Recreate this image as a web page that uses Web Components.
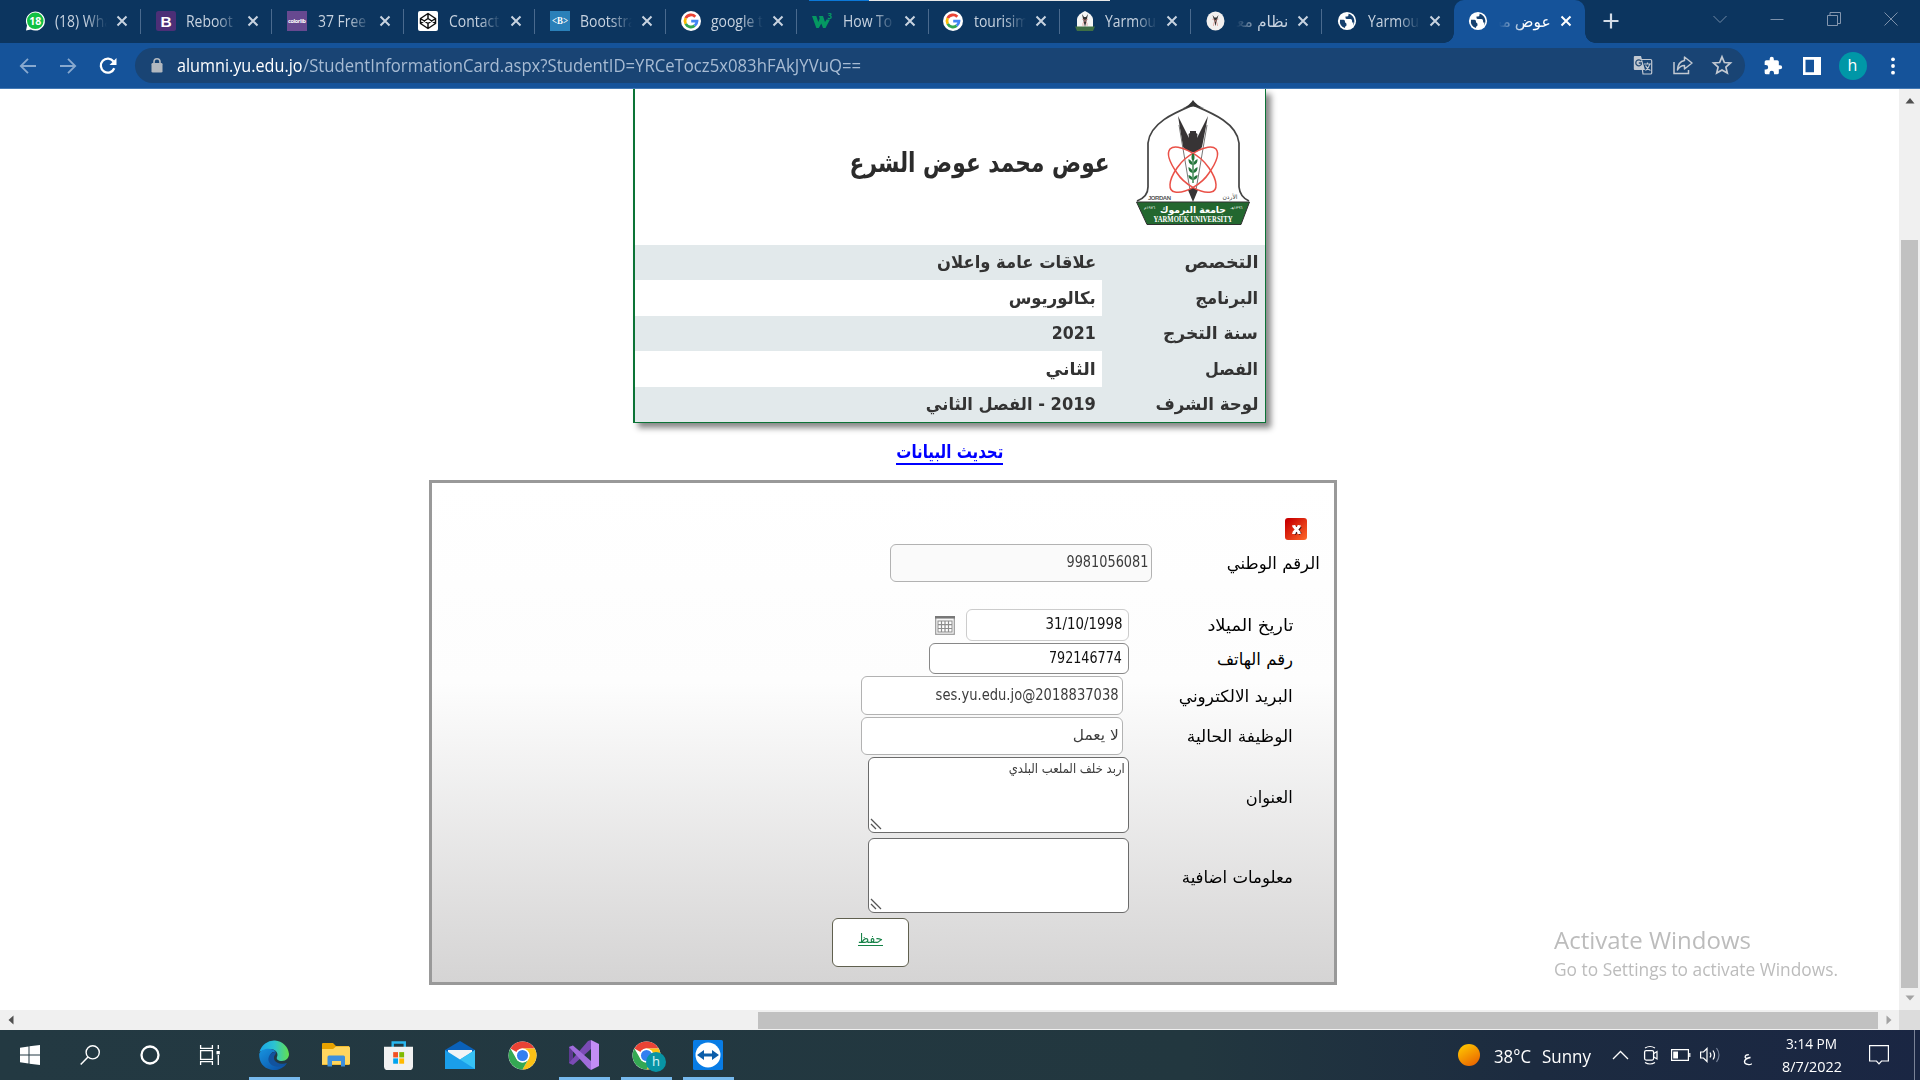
<!DOCTYPE html>
<html lang="ar">
<head>
<meta charset="utf-8">
<title>بطاقة الطالب</title>
<style>
html,body{margin:0;width:1920px;height:1080px;overflow:hidden;background:#fff;font-family:"Open Sans","DejaVu Sans",sans-serif}
</style>
</head>
<body>
<desktop-screen></desktop-screen>
<script>
const ICONS = {
whatsapp:`<svg viewBox="0 0 20 20"><path d="M1 19.5 2 14.5A9.5 9.5 0 1 1 5.800 18.400Z" fill="#fff"/><circle cx="10.300" cy="9.800" r="8.300" fill="#12c143"/><text x="10.200" y="13.600" font-size="10.500" font-weight="700" fill="#fff" text-anchor="middle" font-family="Open Sans" textLength="12">18</text></svg>`,
boot5:`<svg viewBox="0 0 20 20"><rect width="20" height="20" rx="2.500" fill="#4c2f77"/><text x="10" y="15.500" font-size="15.500" font-weight="700" fill="#fff" text-anchor="middle" font-family="Liberation Sans">B</text></svg>`,
colorlib:`<svg viewBox="0 0 20 20"><rect width="20" height="20" fill="#674990"/><text x="1" y="12" font-size="5.500" font-weight="700" fill="#fff" font-family="Open Sans" textLength="18">colorlib</text></svg>`,
codepen:`<svg viewBox="0 0 20 20"><rect width="20" height="20" rx="2" fill="#fff"/><path d="M10 2.500 17.500 7.500V12.500L10 17.500 2.500 12.500V7.500ZM10 2.500V7.500M10 12.500V17.500M2.500 7.500 10 12.500 17.500 7.500M2.500 12.500 10 7.500 17.500 12.500" fill="none" stroke="#111" stroke-width="1.500" stroke-linejoin="round"/></svg>`,
boot3:`<svg viewBox="0 0 20 20"><rect width="20" height="20" fill="#2a80b9"/><text x="10" y="13.300" font-size="10" font-weight="700" fill="#fff" text-anchor="middle" font-family="Liberation Serif" textLength="16" lengthAdjust="spacingAndGlyphs">&lt;B&gt;</text></svg>`,
google:`<svg viewBox="0 0 20 20"><circle cx="10" cy="10" r="10" fill="#fff"/><g fill="none" stroke-width="2.800"><path d="M14.300 5.700A6 6 0 0 0 4.700 7.200" stroke="#ea4335"/><path d="M4.700 7.200A6 6 0 0 0 4.700 12.800" stroke="#fbbc05"/><path d="M4.700 12.800A6 6 0 0 0 13.700 14.700" stroke="#34a853"/><path d="M13.700 14.700A6 6 0 0 0 16 10.200H10.200" stroke="#4285f4"/></g></svg>`,
w3:`<svg viewBox="0 0 20 20"><path d="M0 5H4.300L6.300 11 7.700 7.500 7 5H11L13 11 14.500 8.500H18L13.500 17H11L9.300 12.500 6.800 17H4.300Z" fill="#059862"/><text x="15.500" y="7.500" font-size="8" font-weight="700" fill="#059862" font-family="Open Sans">3</text></svg>`,
yarmouk:`<svg viewBox="0 0 20 20"><path d="M2 16V8Q3 3 10 0 17 3 18 8V16Z" fill="#f5f5f5"/><path d="M7 3 9 6H11L13 3 11.500 10 10 16 8.500 10Z" fill="#333"/><path d="M7 8Q13 10 12 15M13 8Q7 10 8 15" stroke="#d98d86" fill="none" stroke-width=".7"/><path d="M0 15.500H20L18 20H2Z" fill="#3f6f45"/></svg>`,
yround:`<svg viewBox="0 0 20 20"><ellipse cx="9.500" cy="10" rx="9" ry="9.500" fill="#f2f0ef"/><path d="M6.500 4 8.500 6.500H10.500L12.500 4 11 9 9.500 15 8 9Z" fill="#333"/><path d="M6 8Q12 10 11.500 15M12.500 8Q7 10 7.500 15" stroke="#e09a92" fill="none" stroke-width=".7"/></svg>`,
globe:`<svg viewBox="0 0 20 20"><circle cx="10" cy="10" r="9.100" fill="#fff"/><path d="M3 8.800H6.500Q8 8.800 8 10.500V11.500Q9.500 11.500 9.500 13.500V14.500Q8 15 7.800 17A7.500 7.500 0 0 1 3 8.800ZM11.500 2.800V4Q11.500 5.500 9.800 5.500H8.500V7Q8.500 8 10 8H13.500Q15 8 15 9.500L15.200 11.500H16.500L16 14.500A7.500 7.500 0 0 0 11.500 2.800Z" fill="#15406f"/></svg>`,
x:`<svg viewBox="0 0 12 12"><path d="M1.500 1.500 10.500 10.500M10.500 1.500 1.500 10.500" stroke="currentColor" stroke-width="2" fill="none"/></svg>`,
plus:`<svg viewBox="0 0 16 16"><path d="M8 .5V15.500M.5 8H15.500" stroke="#d3dce7" stroke-width="2.200"/></svg>`,
back:`<svg viewBox="0 0 18 18"><path d="M17 9H2M9 1.800 1.800 9 9 16.200" fill="none" stroke="#88a9cf" stroke-width="1.800"/></svg>`,
fwd:`<svg viewBox="0 0 18 18"><path d="M1 9H16M9 1.800 16.200 9 9 16.200" fill="none" stroke="#88a9cf" stroke-width="1.800"/></svg>`,
reload:`<svg viewBox="0 0 18 18"><path d="M15.300 11.300A7 7 0 1 1 14.500 4.500" fill="none" stroke="#fff" stroke-width="2.300"/><path d="M17.500 1V8H10.500Z" fill="#fff"/></svg>`,
lock:`<svg viewBox="0 0 12 15"><rect x=".5" y="5" width="11" height="9.500" rx="1.300" fill="#b3b9c0"/><path d="M3 6V3.800A3 3 0 0 1 9 3.800V6" fill="none" stroke="#b3b9c0" stroke-width="1.600"/></svg>`,
translate:`<svg viewBox="0 0 20 20"><path d="M8 4.500H17.500Q18.700 4.500 18.700 5.700V18Q18.700 19 17.500 19H10Z" fill="none" stroke="#c2c9d2" stroke-width="1.200"/><path d="M1.800 1H8L12 15H1.800Q.8 15 .8 14V2Q.8 1 1.800 1Z" fill="#c2c9d2"/><path d="M8.200 6A3 3 0 1 0 8.300 9.500V8H5.800" fill="none" stroke="#254b74" stroke-width="1.300"/><path d="M11 9H18M14.500 7.500V9M16.800 9Q16 13 12.500 15.500M12.500 10.500Q14 14 17.500 15.500" fill="none" stroke="#c2c9d2" stroke-width="1.200"/></svg>`,
share:`<svg viewBox="0 0 20 20"><path d="M1 7V18.500H15.500V15" fill="none" stroke="#c2c9d2" stroke-width="1.500"/><path d="M11.500 2 19 8 11.500 14V10.500Q7 10.500 4.500 15 5 6.500 11.500 5.500Z" fill="none" stroke="#c2c9d2" stroke-width="1.500" stroke-linejoin="round"/></svg>`,
star:`<svg viewBox="0 0 20 20"><path d="M10 1.800 12.400 7.500 18.500 8 13.900 12.100 15.300 18.100 10 14.900 4.700 18.100 6.100 12.100 1.500 8 7.600 7.500Z" fill="none" stroke="#c2c9d2" stroke-width="1.700"/></svg>`,
puzzle:`<svg viewBox="0 0 24 24"><path d="M20.500 11H19V7a2 2 0 0 0-2-2h-4V3.500a2.500 2.500 0 0 0-5 0V5H4a2 2 0 0 0-2 2v3.800h1.500a2.700 2.700 0 0 1 0 5.400H2V20a2 2 0 0 0 2 2h3.800v-1.500a2.700 2.700 0 0 1 5.400 0V22H17a2 2 0 0 0 2-2v-4h1.500a2.500 2.500 0 0 0 0-5Z" fill="#fff"/></svg>`,
side:`<svg viewBox="0 0 18 18"><path d="M0 0H18V18H0ZM2.500 2.700V15.300H11V2.700Z" fill="#fff" fill-rule="evenodd"/></svg>`,
dots:`<svg viewBox="0 0 4 18"><g fill="#fff"><circle cx="2" cy="2.300" r="1.900"/><circle cx="2" cy="9" r="1.900"/><circle cx="2" cy="15.700" r="1.900"/></g></svg>`,
wchev:`<svg viewBox="0 0 14 14"><path d="M.5 4 7 10.500 13.500 4" fill="none" stroke="#7189a5"/></svg>`,
wmin:`<svg viewBox="0 0 14 14"><path d="M.5 7.500H13.500" stroke="#7d91ab"/></svg>`,
wmax:`<svg viewBox="0 0 14 14"><path d="M.5 3.500H10.500V13.500H.5ZM3 3.500V.5H13.500V11.500H10.500" fill="none" stroke="#8496ae"/></svg>`,
wclose:`<svg viewBox="0 0 14 14"><path d="M.5 .5 13.500 13.500M13.500 .5 .5 13.500" stroke="#7d91ab"/></svg>`,
logo:`<svg viewBox="0 0 114 125"><path d="M1 101Q12 97 12 87V43C14 23 38 13 57 5 76 13 101 23 103 43V87Q104 97 113 101" fill="#fff" stroke="#444" stroke-width="1.700"/><path d="M47 8Q54 5 57 0 60 5 68 8Q57 5 47 8Z" fill="#333"/><path d="M42 16 53 38 52.500 34 54 33V31H60V33L61.500 34 61 38 72 16 66 47Q62 53 57 52 51 52 47 47Z" fill="#373435"/><path d="M43 25 54 90M71 25 60 90" stroke="#777" stroke-width="1" fill="none"/><path d="M52 90Q57 85 62 90L57 102Z" fill="#373435"/><g fill="none" stroke="#ea5148" stroke-width="1.500"><path d="M34 49C40 43 63 53 73 68 82 81 82 91 75 92 65 94 48 84 41 73 34 63 30 54 34 49Z"/><path d="M80 49C74 43 51 53 41 68 32 81 32 91 39 92 49 94 66 84 73 73 80 63 84 54 80 49Z"/></g><path d="M57 57V83" stroke="#23753a" stroke-width="1.300"/><g fill="#23753a"><ellipse cx="57" cy="57" rx="1.500" ry="3.500"/><path d="M56.500 65Q52 64 52.500 59 57 61 56.500 65ZM57.500 65Q62 64 61.500 59 57 61 57.500 65ZM56.500 73Q52 72 52.500 67 57 69 56.500 73ZM57.500 73Q62 72 61.500 67 57 69 57.500 73ZM56.500 80Q52 79 52.500 75 57 76 56.500 80ZM57.500 80Q62 79 61.500 75 57 76 57.500 80Z"/></g><path d="M.5 102H113.500L105 124.500H11Z" fill="#23672f" stroke="#303030"/><g font-family="Liberation Sans"><text x="23.500" y="100" font-size="6" font-weight="700" fill="#555" text-anchor="middle" textLength="23">JORDAN</text><text x="94" y="98.500" font-size="6" fill="#444" text-anchor="middle" font-family="DejaVu Sans">الأردن</text><g fill="#fff"><text x="57" y="112.500" font-size="9.500" font-weight="700" text-anchor="middle" font-family="DejaVu Sans" textLength="66" lengthAdjust="spacingAndGlyphs">جامعة اليرموك</text><text x="100.500" y="109" font-size="4" text-anchor="middle" font-family="DejaVu Sans">١٣٩٦هـ</text><text x="13.500" y="109" font-size="4" text-anchor="middle" font-family="DejaVu Sans">١٩٧٦م</text><text x="57" y="122" font-size="7.500" font-weight="700" text-anchor="middle" font-family="Liberation Serif" textLength="79" lengthAdjust="spacingAndGlyphs">YARMOUK UNIVERSITY</text></g></g></svg>`,
redx:`<svg viewBox="0 0 22 22"><defs><linearGradient id="r" x1="0" y1="0" x2="1" y2="1"><stop offset=".1" stop-color="#c80000"/><stop offset="1" stop-color="#ff6a2a"/></linearGradient></defs><rect width="22" height="22" rx="3" fill="url(#r)"/><path d="M9.500 8.500 15.500 16M15.500 8.500 9.500 16" stroke="#3c1010" stroke-width="3"/><path d="M8.500 8 14.500 15M14.500 8 8.500 15" stroke="#fff" stroke-width="2.800"/><path d="M7.200 7.900H10.500M12.500 7.900H15.700M7.200 15.200H10.500M12.500 15.200H15.700" stroke="#fff" stroke-width="1.500"/></svg>`,
cal:`<svg viewBox="0 0 20 19"><rect x=".7" y=".7" width="18.600" height="17.600" fill="#f7f7f7" stroke="#999" stroke-width="1.200"/><path d="M0 1.300H20" stroke="#777" stroke-width="2.500"/><rect x="3" y="5" width="14" height="11" fill="#fff" stroke="#8d8d8d"/><path d="M6.500 5V16M10 5V16M13.500 5V16M3 8.700H17M3 12.500H17" stroke="#8d8d8d" stroke-width="1.200"/></svg>`,
grip:`<svg viewBox="0 0 12 12"><path d="M1 1 11 11M1 6 6 11" stroke="#555" stroke-width="1.300"/></svg>`,
win:`<svg viewBox="0 0 20 20"><path d="M0 2.700 8.500 1.400V9.500H0ZM9.500 1.300 20 0V9.500H9.500ZM0 10.500H8.500V18.600L0 17.300ZM9.500 10.500H20V20L9.500 18.700Z" fill="#fff"/></svg>`,
search:`<svg viewBox="0 0 20 20"><circle cx="12.700" cy="7.300" r="6.600" fill="none" stroke="#fff" stroke-width="1.400"/><path d="M8 12 .7 19.500" stroke="#fff" stroke-width="1.500"/></svg>`,
cortana:`<svg viewBox="0 0 20 20"><circle cx="10" cy="10" r="8.500" fill="none" stroke="#fff" stroke-width="2.300"/></svg>`,
task:`<svg viewBox="0 0 20 20"><path d="M.6 0V3.300H12.400V0M.6 20V16.700H12.400V20M.6 5.700H12.400V14.300H.6ZM18.300 0V4M18.300 10V20" fill="none" stroke="#fff" stroke-width="1.300"/><rect x="16.500" y="6" width="3.300" height="3.300" fill="#fff"/></svg>`,
edge:`<svg viewBox="0 0 30 30"><defs><linearGradient id="e" x1="0" x2="1"><stop stop-color="#1aa4e8"/><stop offset=".5" stop-color="#2cc3d2"/><stop offset="1" stop-color="#63e04e"/></linearGradient><linearGradient id="f" x1="0" y1="0" x2="1" y2="1"><stop stop-color="#1794e0"/><stop offset="1" stop-color="#0a4aa0"/></linearGradient></defs><path d="M.5 12A15 15 0 0 1 30 14C30 18 27 21 23 21 19 21 17 19 18 17 20 13 16 9 12 9 6 9 1 12 .5 12Z" fill="url(#e)"/><path d="M.2 14C2 8 14 7 17 12 13 11 10 15 11 19 13 26 21 28 28 23 24 29 18 31 12 29.700 4 28 0 22 .2 14Z" fill="url(#f)"/><path d="M17 12C12 11 8 17 10 22 13 28 22 28 28 23 23 25 15 23 15 18 15 15 17 15 17 12Z" fill="#12539e"/></svg>`,
folder:`<svg viewBox="0 0 28 24"><path d="M0 1Q0 0 1 0H11L14 3H27V22H0Z" fill="#e8a200"/><path d="M0 6H11L14 3.500H27Q28 3.500 28 5V21.500H0Z" fill="#ffd65f"/><path d="M5.500 23.500V14Q5.500 12.500 7 12.500H21.500Q23 12.500 23 14V23.500H19V18H10V23.500Z" fill="#3d8fdc"/></svg>`,
store:`<svg viewBox="0 0 30 30"><path d="M9 7V1.500H21.500V7" fill="none" stroke="#29b6ee" stroke-width="2.500"/><path d="M0 6H30V26Q30 30 26 30H4Q0 30 0 26Z" fill="#f1f1f1"/><path d="M9.500 11.500H14.500V17H9.500Z" fill="#f25022"/><path d="M15.800 11.500H20.800V17H15.800Z" fill="#7fba00"/><path d="M9.500 18H14.500V23.500H9.500Z" fill="#00a4ef"/><path d="M15.800 18H20.800V23.500H15.800Z" fill="#ffb900"/></svg>`,
mail:`<svg viewBox="0 0 30 29"><path d="M0 9 15 0 30 9V20H0Z" fill="#0a61b9"/><path d="M3 9H27V20H3Z" fill="#f1f4f6"/><path d="M0 9 15 18.500 30 9V28H0Z" fill="#1a9eea"/><path d="M15 18.500 30 9V28Z" fill="#37c2f5"/></svg>`,
chrome:`<svg viewBox="0 0 30 30"><circle cx="15" cy="15" r="14.500" fill="#fff"/><path d="M15 .5A14.500 14.500 0 0 1 27.600 7.800H15A7.200 7.200 0 0 0 8.800 11.400L2.500 7.800A14.500 14.500 0 0 1 15 .5Z" fill="#ea4335"/><path d="M27.600 7.800A14.500 14.500 0 0 1 15 29.500L21.200 18.600A7.200 7.200 0 0 0 21.200 11.400L15 7.800Z" fill="#fbc116"/><path d="M2.500 7.800A14.500 14.500 0 0 0 15 29.500L21.200 18.600A7.200 7.200 0 0 1 8.800 18.600Z" fill="#34a853"/><circle cx="15" cy="15" r="7.200" fill="#fff"/><circle cx="15" cy="15" r="5.700" fill="#347ff0"/></svg>`,
vs:`<svg viewBox="0 0 30 30"><path d="M0 7 4 5.500V24.500L0 23Z" fill="#5d3a91"/><path d="M0 23 4 25 22 9V0L19 1Z" fill="#7a4bb5"/><path d="M0 7 4 5.500 22 21V30L19 28Z" fill="#a06ddb"/><path d="M22 0 30 4V26L22 30Z" fill="#c38df5"/></svg>`,
tv:`<svg viewBox="0 0 30 30"><rect width="30" height="30" rx="1.500" fill="#087ce5"/><circle cx="15" cy="15" r="12.500" fill="#fff"/><path d="M4 15 11 10V13.500H19V10L26 15 19 20V16.500H11V20Z" fill="#0c5eaa"/></svg>`,
sun:`<svg viewBox="0 0 22 22"><defs><linearGradient id="s" x1=".2" y1="0" x2=".8" y2="1"><stop stop-color="#ffc800"/><stop offset="1" stop-color="#ea6200"/></linearGradient></defs><circle cx="11" cy="11" r="11" fill="url(#s)"/></svg>`,
up:`<svg viewBox="0 0 17 10"><path d="M1 9 8.500 1.500 16 9" fill="none" stroke="#fff" stroke-width="1.300"/></svg>`,
meet:`<svg viewBox="0 0 16 20"><rect x="1.600" y="5.600" width="9" height="9.500" rx="1.500" fill="none" stroke="#fff" stroke-width="1.300"/><path d="M10.800 8.500 14 6.500V14L10.800 12M2 3Q7 0 12 3M2 17.500Q7 20.500 12 17.500" fill="none" stroke="#fff" stroke-width="1.200"/></svg>`,
battery:`<svg viewBox="0 0 20 12"><path d="M.6 .6H17.400V11.400H.6ZM18.800 4V8" fill="none" stroke="#fff" stroke-width="1.200"/><rect x="2.200" y="2.500" width="4.800" height="7" fill="#fff"/></svg>`,
speaker:`<svg viewBox="0 0 21 18"><path d="M.6 6H3.500L7 2.500V15.500L3.500 12H.6Z" fill="none" stroke="#fff" stroke-width="1.200"/><path d="M10 6.500Q11.700 9 10 11.500M13 4.500Q16 9 13 13.500" fill="none" stroke="#fff" stroke-width="1.200"/><path d="M16.500 2Q21.500 9 16.500 16" fill="none" stroke="#78849b" stroke-width="1.200"/></svg>`,
notif:`<svg viewBox="0 0 20 20"><path d="M.6 .6H19.400V16H12.500L10 18.800 7.500 16H.6Z" fill="none" stroke="#fff" stroke-width="1.200"/></svg>`,
aup:`<svg viewBox="0 0 10 6"><path d="M5 0 9.500 5.500H.5Z" fill="#505050"/></svg>`,
adown:`<svg viewBox="0 0 10 6"><path d="M5 5.500 9.500 .5H.5Z" fill="#a3a3a3"/></svg>`,
aleft:`<svg viewBox="0 0 6 10"><path d="M.5 5 5.500 .5V9.500Z" fill="#505050"/></svg>`,
aright:`<svg viewBox="0 0 6 10"><path d="M5.500 5 .5 .5V9.500Z" fill="#a3a3a3"/></svg>`
};

function component(name, render, ready){
  customElements.define(name, class extends HTMLElement{
    connectedCallback(){
      if(this.shadowRoot) return;
      const t=document.createElement('template');
      t.innerHTML=render(this);
      this.attachShadow({mode:'open'}).append(t.content.cloneNode(true));
      if(ready) ready(this);
    }
  });
}
const a=(e,n,d='')=>e.getAttribute(n)??d;

component('ui-icon', e=>`<style>:host{display:block;flex:none;direction:ltr;width:${a(e,'w','20')}px;height:${a(e,'h',a(e,'w','20'))}px}svg{display:block;width:100%;height:100%;overflow:visible}</style>${ICONS[a(e,'name')]}`);

/* Single line of text condensed or stretched to a given width. */
component('fit-text', e=>`<style>:host{display:block;flex:none;width:${a(e,'w')}px;font-size:${a(e,'size','15')}px;line-height:1.3;white-space:nowrap}span{display:inline-block;transform-origin:${a(e,'dir')==='rtl'?'right':'left'} center}</style><span><slot></slot></span>`,
 e=>{const s=e.shadowRoot.querySelector('span');s.style.transform=`scaleX(${(+a(e,'w'))/s.getBoundingClientRect().width})`;});

component('browser-tab', e=>`<style>
:host{display:flex;flex:none;box-sizing:border-box;width:131.250px;height:43px;align-items:center;padding-left:14.500px;position:relative;color:#c8d3e0;font-size:15.500px}
:host::after{content:"";width:1px;height:25px;background:#4a6a8e;margin-left:12px;flex:none}
:host([active]){background:#15539a;border-radius:10px 10px 0 0;color:#fff}
:host([active])::after,:host([last])::after{background:transparent}
:host([active]) .l,:host([active]) .r{position:absolute;bottom:0;width:10px;height:10px}
.l{left:-10px;background:radial-gradient(circle at 0 0,transparent 9.500px,#15539a 10px)}
.r{right:-10px;background:radial-gradient(circle at 100% 0,transparent 9.500px,#15539a 10px)}
ui-icon{margin-top:-1px}
.t{flex:none;width:52px;margin:-2px 9px 0 10.500px;overflow:hidden;white-space:nowrap;-webkit-mask-image:linear-gradient(to right,#000 58%,transparent);line-height:26px;height:26px}
.t span{display:inline-block;transform:scaleX(.9);transform-origin:left}
.t[dir=rtl]{-webkit-mask-image:linear-gradient(to left,#000 50%,transparent)}.t[dir=rtl] span{transform:none}
</style><i class="l"></i><ui-icon name="${a(e,'icon')}"></ui-icon><div class="t" dir="${a(e,'tdir','ltr')}"><span><slot></slot></span></div><ui-icon name="x" w="12"></ui-icon><i class="r"></i>`);

component('tab-strip', ()=>`<style>
:host{display:flex;height:43px;background:#0c355f;align-items:center;padding-left:10px;position:relative}
.g{flex:none;margin:-1px 0 0 17.500px}.c{display:flex;gap:43px;margin-left:94px;margin-top:-6px}
.edge{position:absolute;top:0;left:809px;width:301px;height:1px;background:linear-gradient(to right,#0b78d8 60px,#e8e8e8 60px)}
</style>
<browser-tab icon="whatsapp">(18) What</browser-tab><browser-tab icon="boot5">Reboot ·</browser-tab><browser-tab icon="colorlib">37 Free B</browser-tab><browser-tab icon="codepen">Contact F</browser-tab><browser-tab icon="boot3">Bootstrap</browser-tab><browser-tab icon="google">google tra</browser-tab><browser-tab icon="w3">How To M</browser-tab><browser-tab icon="google">tourisim t</browser-tab><browser-tab icon="yarmouk">Yarmouk</browser-tab><browser-tab icon="yround" tdir="rtl">نظام معلومات</browser-tab><browser-tab icon="globe" last>Yarmouk</browser-tab><browser-tab icon="globe" active tdir="rtl">عوض محمد</browser-tab>
<ui-icon class="g" name="plus" w="16"></ui-icon><div class="c"><ui-icon name="wchev" w="14"></ui-icon><ui-icon name="wmin" w="14"></ui-icon><ui-icon name="wmax" w="14"></ui-icon><ui-icon name="wclose" w="14"></ui-icon></div><i class="edge"></i>`);

component('address-bar', ()=>`<style>
:host{display:flex;box-sizing:border-box;height:46px;background:#15539a;border-bottom:1px solid #4379b4;align-items:center;padding-left:18.500px;padding-top:1px}
.box{display:flex;align-items:center;box-sizing:border-box;width:1610px;height:35px;border-radius:18px;background:#194474;margin:-2px 0 0 17.500px;padding:0 12.500px 0 16.500px;color:#a7bbd3}
.a{display:flex;gap:19.500px;margin-left:auto}.h{color:#fff}.box fit-text{margin-top:1px}.box fit-text:first-of-type{margin-left:14px}
.av{width:28px;height:28px;border-radius:50%;background:#0097a7;color:#fff;font-size:16px;line-height:27px;text-align:center;margin:-1px 24px 0 18px}
</style>
<ui-icon name="back" w="18"></ui-icon><ui-icon name="fwd" w="18" style="margin-left:22px"></ui-icon><ui-icon name="reload" w="18" style="margin-left:22.500px"></ui-icon>
<div class="box"><ui-icon name="lock" w="12" h="15"></ui-icon><fit-text class="h" w="125.500" size="17.500">alumni.yu.edu.jo</fit-text><fit-text w="558" size="17.500">/StudentInformationCard.aspx?StudentID=YRCeTocz5x083hFAkJYVuQ==</fit-text>
<div class="a"><ui-icon name="translate" w="20"></ui-icon><ui-icon name="share" w="20"></ui-icon><ui-icon name="star" w="20"></ui-icon></div></div>
<ui-icon name="puzzle" w="20" style="margin-left:18px"></ui-icon><ui-icon name="side" w="18" style="margin-left:20px"></ui-icon><div class="av">h</div><ui-icon name="dots" w="4" h="18"></ui-icon>`);

component('info-row', e=>`<style>
:host{display:flex;height:${a(e,'h','35')}px;color:#333;font-weight:700;font-family:"DejaVu Sans",sans-serif}
div{display:flex;align-items:center;box-sizing:border-box}
.k{width:163px;padding-right:7px;background:#e2e9eb}.v{flex:1;padding-right:6px;background:${e.hasAttribute('alt')?'#fff':'#e2e9eb'}}
</style><div class="k"><fit-text dir="rtl" size="17.500" w="${a(e,'kw')}">${a(e,'label')}</fit-text></div><div class="v"><fit-text dir="rtl" size="17.500" w="${a(e,'vw')}"><slot></slot></fit-text></div>`);

component('student-card', ()=>`<style>
:host{display:block;direction:rtl;box-sizing:border-box;width:633px;height:334px;margin-left:633px;border:solid #0b7336;border-width:0 1px 1px 2px;box-shadow:5px 5px 6px #888;background:#fff}
.top{display:flex;height:156px;align-items:flex-start}.top ui-icon{margin:11px 15px 0 0}.top fit-text{margin:56px 26px 0 0;color:#2b2b2b;font-weight:700;font-family:"DejaVu Sans",sans-serif}
</style><div class="top"><ui-icon name="logo" w="114" h="125"></ui-icon><fit-text dir="rtl" w="260" size="27">عوض محمد عوض الشرع</fit-text></div>
<info-row label="التخصص" kw="74" vw="159">علاقات عامة واعلان</info-row>
<info-row alt h="36" label="البرنامج" kw="63" vw="87">بكالوريوس</info-row>
<info-row label="سنة التخرج" kw="95" vw="44">2021</info-row>
<info-row alt h="36" label="الفصل" kw="53" vw="50">الثاني</info-row>
<info-row label="لوحة الشرف" kw="103" vw="170">2019 - الفصل الثاني</info-row>`);

component('form-row', e=>`<style>
:host{display:flex;align-items:center;height:${a(e,'h')}px;margin-top:${a(e,'mt','2')}px;padding-right:${a(e,'pr','41')}px}
.l{display:flex;width:${a(e,'lw','164')}px;flex:none;color:#000;margin-top:${a(e,'dy','2')}px}
</style><div class="l"><fit-text dir="rtl" size="16.500" w="${a(e,'tw')}">${a(e,'label')}</fit-text></div><slot></slot>`);

component('form-field', e=>`<style>
:host{display:flex;box-sizing:border-box;width:${a(e,'w')}px;height:100%;border:1px solid ${a(e,'line','#b2b2b2')};border-radius:6px;background:${a(e,'bg','#fff')};padding-right:${a(e,'pr','3')}px;align-items:center;color:${a(e,'ink','#3c3c3c')};position:relative}
:host([area]){align-items:flex-start;padding-top:3px}
.g{position:absolute;left:1px;bottom:2px}
</style>${a(e,'tw')?`<fit-text dir="rtl" size="${a(e,'size','15')}" w="${a(e,'tw')}"><slot></slot></fit-text>`:''}${e.hasAttribute('area')?'<ui-icon class="g" name="grip" w="12"></ui-icon>':''}`);

component('update-form', ()=>`<style>
:host{display:block;direction:rtl;box-sizing:border-box;width:908px;height:505px;margin-left:429px;border:3px solid #999;padding-top:35px;background:linear-gradient(#fff 0,#fdfdfd 40%,#d5d4d4 100%);font-family:"DejaVu Sans",sans-serif}
.x{margin-right:27px}.save{display:flex;box-sizing:border-box;width:77px;height:49px;margin:5px 425px 0 0;border:1px solid #60604f;border-radius:6px;background:#fff;justify-content:center;padding-top:12px;color:#168247}
.save fit-text{height:14px;border-bottom:1.500px solid #168247}
</style><ui-icon class="x" name="redx" w="22"></ui-icon>
<form-row mt="4" h="38" pr="14" lw="168" label="الرقم الوطني" tw="93"><form-field w="262" bg="#fafafa" tw="82">9981056081</form-field></form-row>
<form-row mt="27" h="32" label="تاريخ الميلاد" tw="86"><form-field w="163" line="#ccc" pr="6" ink="#111" tw="77">31/10/1998</form-field><ui-icon name="cal" w="20" h="19" style="margin-right:11px"></ui-icon></form-row>
<form-row h="31" label="رقم الهاتف" tw="76"><form-field w="200" line="#888" pr="6" ink="#111" tw="73">792146774</form-field></form-row>
<form-row h="39" lw="170" label="البريد الالكتروني" tw="114"><form-field w="262" tw="183">ses.yu.edu.jo@2018837038</form-field></form-row>
<form-row h="38" lw="170" label="الوظيفة الحالية" tw="106"><form-field w="262" tw="46">لا يعمل</form-field></form-row>
<form-row h="76" dy="5" label="العنوان" tw="47"><form-field area w="261" line="#6b6b6b" size="13" tw="116">اربد خلف الملعب البلدي</form-field></form-row>
<form-row mt="5" h="75" dy="5" label="معلومات اضافية" tw="111"><form-field area w="261" line="#6b6b6b"></form-field></form-row>
<div class="save"><fit-text dir="rtl" w="25" size="13">حفظ</fit-text></div>`);

component('activation-note', ()=>`<style>:host{display:block;position:absolute;left:1554px;top:835px;color:#bcbcbc}fit-text+fit-text{margin-top:2px}</style><fit-text w="197" size="24.500">Activate Windows</fit-text><fit-text w="284" size="18">Go to Settings to activate Windows.</fit-text>`);

component('web-view', ()=>`<style>
:host{display:flex;height:941px;flex-direction:column;background:#fff;position:relative}
.m{display:flex;height:921px}.p{width:1899px;overflow:hidden}
.v{box-sizing:border-box;width:21px;background:#f0f0f0;display:flex;flex-direction:column;align-items:center;padding:9px 0 9px}
.v i{width:17px;height:749px;background:#c1c1c1;margin:136px 0 7px}
.h{height:20px;display:flex;align-items:center;background:#f0f0f0}.h i{width:1120px;height:17px;background:#c1c1c1;margin:1px 8px 0 744px}.h b{width:21px;height:20px;margin-left:auto;background:#dcdcdc}
.link{margin:16px 0 0 896px;width:107px;height:26px;box-sizing:border-box;color:#00f;font-weight:700;font-family:"DejaVu Sans",sans-serif;border-bottom:2px solid #00f}
update-form{margin-top:15px}
</style><div class="m"><div class="p"><student-card></student-card><div class="link"><fit-text dir="rtl" w="107" size="19">تحديث البيانات</fit-text></div><update-form></update-form></div>
<div class="v"><ui-icon name="aup" w="10" h="6"></ui-icon><i></i><ui-icon name="adown" w="10" h="6"></ui-icon></div></div>
<div class="h"><ui-icon name="aleft" w="6" h="10" style="margin-left:8px"></ui-icon><i></i><ui-icon name="aright" w="6" h="10"></ui-icon><b></b></div><activation-note></activation-note>`);

component('task-item', e=>`<style>:host{display:flex;flex:none;width:${a(e,'slot-w','62')}px;height:50px;align-items:center;justify-content:center;position:relative}:host([run])::after{content:"";position:absolute;bottom:0;width:51px;height:3px;background:#76b9ed}.b{position:absolute;left:31px;top:22px;width:20px;height:20px;border-radius:50%;background:#0894a5;color:#d9f4f6;font-size:13px;line-height:19px;text-align:center}</style><ui-icon name="${a(e,'icon')}" w="${a(e,'w','30')}" h="${a(e,'h',a(e,'w','30'))}"></ui-icon>${a(e,'badge')?`<span class="b">${a(e,'badge')}</span>`:''}`);

component('task-bar', ()=>`<style>
:host{display:flex;height:50px;align-items:center;background:linear-gradient(to right,#233942 0,#22373f 62%,#1c2b40 80%,#1a2643 100%);color:#fff}
.s{display:flex;width:243px}.tray{display:flex;align-items:center;margin-left:718.500px;flex:none}
.ck{display:flex;flex-direction:column;align-items:center;width:60px;margin-left:30px}.ck fit-text+fit-text{margin-top:3px}
.e{width:1px;height:50px;background:#7a8296;margin-left:25px}
</style><div class="s"><task-item icon="win" w="20" slot-w="60"></task-item><task-item icon="search" w="20" slot-w="60"></task-item><task-item icon="cortana" w="20" slot-w="60"></task-item><task-item icon="task" w="20" slot-w="60"></task-item></div>
<task-item run icon="edge"></task-item><task-item icon="folder" w="28" h="24"></task-item><task-item icon="store" w="29"></task-item><task-item icon="mail" w="30" h="29"></task-item><task-item icon="chrome" w="29"></task-item><task-item run icon="vs"></task-item><task-item run icon="chrome" w="29" badge="h"></task-item><task-item run icon="tv"></task-item>
<div class="tray"><ui-icon name="sun" w="22"></ui-icon><fit-text w="37" size="17.500" style="margin:3px 0 0 14px">38°C</fit-text><fit-text w="49" size="17.500" style="margin:3px 21px 0 11px">Sunny</fit-text><ui-icon name="up" w="17" h="10"></ui-icon><ui-icon name="meet" w="16" h="20" style="margin-left:14px"></ui-icon><ui-icon name="battery" w="20" h="12" style="margin-left:12px"></ui-icon><ui-icon name="speaker" w="21" h="18" style="margin-left:9px"></ui-icon><fit-text w="9" size="15" style="margin:4px 0 0 22px">ع</fit-text>
<div class="ck"><fit-text w="51" size="15">3:14 PM</fit-text><fit-text w="60" size="15">8/7/2022</fit-text></div><ui-icon name="notif" w="20" style="margin-left:27px"></ui-icon><i class="e"></i></div>`);

component('desktop-screen', ()=>`<style>:host{display:flex;flex-direction:column;width:1920px;height:1080px;overflow:hidden}</style><tab-strip></tab-strip><address-bar></address-bar><web-view></web-view><task-bar></task-bar>`);
</script>
</body>
</html>
